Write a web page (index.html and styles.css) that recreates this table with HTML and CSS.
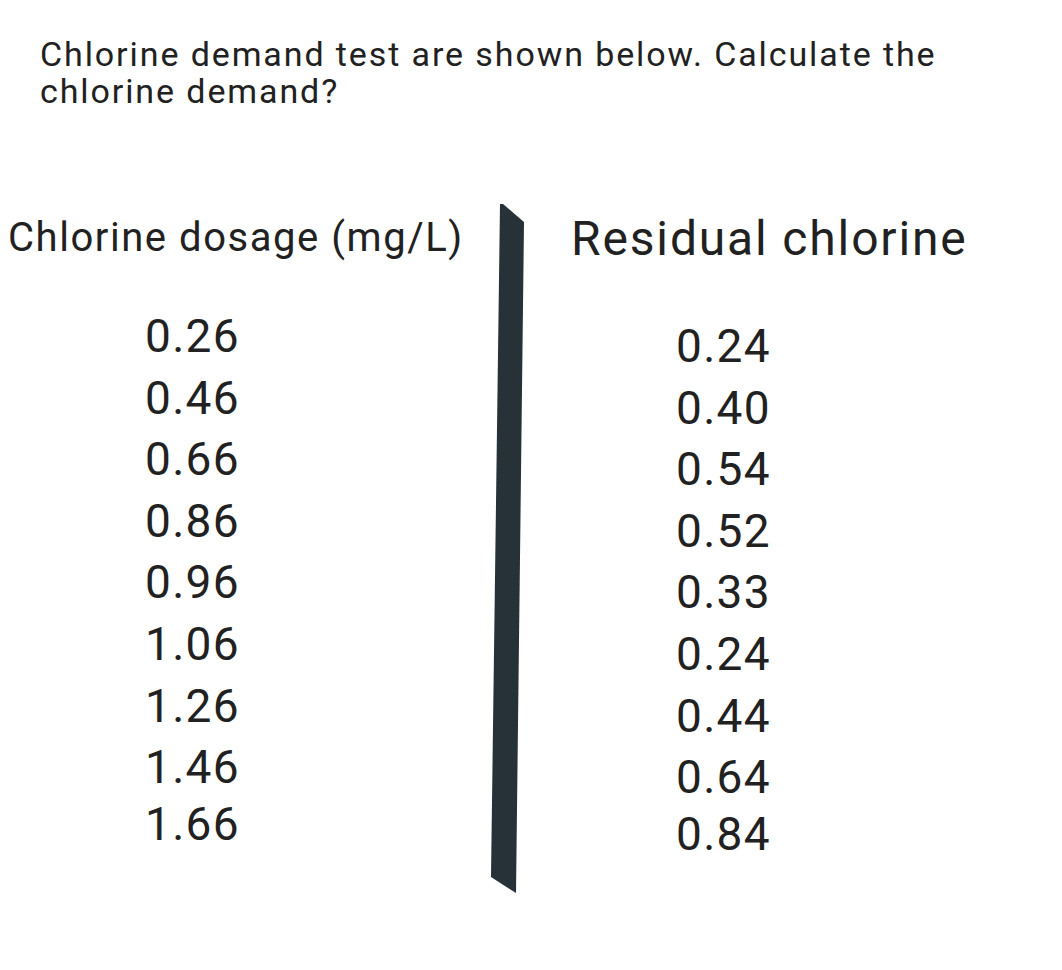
FILE: index.html
```html
<!DOCTYPE html>
<html lang="en">
<head>
<meta charset="utf-8">
<title>Chlorine demand</title>
<link rel="stylesheet" href="styles.css">
</head>
<body>
<p class="question">Chlorine demand test are shown below. Calculate the<br>chlorine demand?</p>
<div class="table">
  <div class="col col-left">
    <div class="head">Chlorine dosage (mg/L)</div>
    <ul class="values">
      <li>0.26</li>
      <li>0.46</li>
      <li>0.66</li>
      <li>0.86</li>
      <li>0.96</li>
      <li>1.06</li>
      <li>1.26</li>
      <li>1.46</li>
      <li class="last">1.66</li>
    </ul>
  </div>
  <svg class="bar" width="35" height="692" viewBox="0 0 35 692" aria-hidden="true">
    <polygon points="10,1 13,1 34,19 26,690 1,674" fill="#263238"/>
  </svg>
  <div class="col col-right">
    <div class="head">Residual chlorine</div>
    <ul class="values">
      <li>0.24</li>
      <li>0.40</li>
      <li>0.54</li>
      <li>0.52</li>
      <li>0.33</li>
      <li>0.24</li>
      <li>0.44</li>
      <li>0.64</li>
      <li class="last">0.84</li>
    </ul>
  </div>
</div>
</body>
</html>
```
FILE: styles.css
```css
html, body {
  margin: 0;
  padding: 0;
  background: #ffffff;
}

body {
  font-family: Roboto, "Liberation Sans", sans-serif;
  color: #212121;
}

.question {
  margin: 36px 0 0 40px;
  font-size: 34px;
  line-height: 37px;
  letter-spacing: 1.9px;
}

.table {
  display: flex;
  align-items: flex-start;
  margin-top: 93px;
}

.col {
  box-sizing: border-box;
}

.col-left {
  width: 490px;
  padding-left: 8px;
}

.col-right {
  padding-left: 46px;
}

.head {
  margin-top: 11px;
  font-size: 40px;
  line-height: 48px;
  letter-spacing: 1.55px;
  white-space: nowrap;
}

.col-right .head {
  margin-top: 12px;
  font-size: 48px;
  letter-spacing: 1.85px;
}

.values {
  list-style: none;
  margin: 0;
  padding: 0;
  font-size: 46px;
  line-height: 61.6px;
  letter-spacing: 1.3px;
}

.col-left .values {
  margin-top: 44px;
  padding-left: 137px;
}

.col-right .values {
  margin-top: 53px;
  padding-left: 105px;
}

.values .last {
  margin-top: -5px;
}

.bar {
  display: block;
  flex-shrink: 0;
}
```
